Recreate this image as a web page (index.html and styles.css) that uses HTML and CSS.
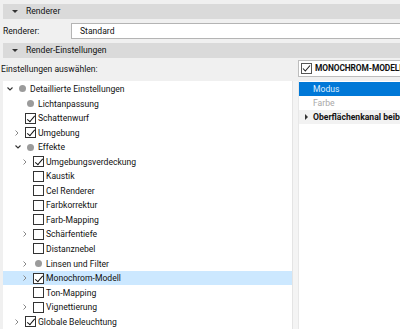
FILE: index.html
```html
<!DOCTYPE html>
<html>
<head>
<meta charset="utf-8">
<link rel="stylesheet" href="styles.css">
</head>
<body>
<div class="app">
  <div class="section-head"><span class="tri-down"></span>Renderer</div>
  <div class="field-row">
    <span class="field-label">Renderer:</span>
    <div class="select">Standard</div>
  </div>
  <div class="section-head"><span class="tri-down"></span>Render-Einstellungen</div>
  <div class="split">
    <div class="choose-label">Einstellungen auswählen:</div>
    <div class="divider-top"></div>
    <div class="prop-head">
      <span class="cb"><svg width="11" height="11" viewBox="0 0 11 11"><rect x="0.5" y="0.5" width="10" height="10" fill="#fff" stroke="#555"/><polyline points="2,5.5 4.3,8 9,2.5" fill="none" stroke="#222" stroke-width="1.1"/></svg></span>
      <span class="prop-title">MONOCHROM-MODELL</span>
    </div>

    <div class="tree">
      <div class="row l0"><span class="chev"><svg width="6" height="4" viewBox="0 0 6 4"><polyline points="0.5,0.5 3,3 5.5,0.5" fill="none" stroke="#333" stroke-width="1.1"/></svg></span><span class="ico"><span class="dot"></span></span><span class="txt">Detaillierte Einstellungen</span></div>
      <div class="row l1"><span class="chev"></span><span class="ico"><span class="dot"></span></span><span class="txt">Lichtanpassung</span></div>
      <div class="row l1"><span class="chev"></span><span class="ico"><span class="box on"></span></span><span class="txt">Schattenwurf</span></div>
      <div class="row l1"><span class="chev"><svg width="4" height="6" viewBox="0 0 4 6"><polyline points="0.5,0.5 3,3 0.5,5.5" fill="none" stroke="#888" stroke-width="1"/></svg></span><span class="ico"><span class="box on"></span></span><span class="txt">Umgebung</span></div>
      <div class="row l1"><span class="chev"><svg width="6" height="4" viewBox="0 0 6 4"><polyline points="0.5,0.5 3,3 5.5,0.5" fill="none" stroke="#333" stroke-width="1.1"/></svg></span><span class="ico"><span class="dot"></span></span><span class="txt">Effekte</span></div>
      <div class="row l2"><span class="chev"><svg width="4" height="6" viewBox="0 0 4 6"><polyline points="0.5,0.5 3,3 0.5,5.5" fill="none" stroke="#888" stroke-width="1"/></svg></span><span class="ico"><span class="box on"></span></span><span class="txt">Umgebungsverdeckung</span></div>
      <div class="row l2"><span class="chev"></span><span class="ico"><span class="box"></span></span><span class="txt">Kaustik</span></div>
      <div class="row l2"><span class="chev"></span><span class="ico"><span class="box"></span></span><span class="txt">Cel Renderer</span></div>
      <div class="row l2"><span class="chev"></span><span class="ico"><span class="box"></span></span><span class="txt">Farbkorrektur</span></div>
      <div class="row l2"><span class="chev"></span><span class="ico"><span class="box"></span></span><span class="txt">Farb-Mapping</span></div>
      <div class="row l2"><span class="chev"><svg width="4" height="6" viewBox="0 0 4 6"><polyline points="0.5,0.5 3,3 0.5,5.5" fill="none" stroke="#888" stroke-width="1"/></svg></span><span class="ico"><span class="box"></span></span><span class="txt">Schärfentiefe</span></div>
      <div class="row l2"><span class="chev"></span><span class="ico"><span class="box"></span></span><span class="txt">Distanznebel</span></div>
      <div class="row l2"><span class="chev"><svg width="4" height="6" viewBox="0 0 4 6"><polyline points="0.5,0.5 3,3 0.5,5.5" fill="none" stroke="#888" stroke-width="1"/></svg></span><span class="ico"><span class="dot"></span></span><span class="txt">Linsen und Filter</span></div>
      <div class="row l2 sel"><span class="chev"><svg width="4" height="6" viewBox="0 0 4 6"><polyline points="0.5,0.5 3,3 0.5,5.5" fill="none" stroke="#888" stroke-width="1"/></svg></span><span class="ico"><span class="box on"></span></span><span class="txt">Monochrom-Modell</span></div>
      <div class="row l2"><span class="chev"></span><span class="ico"><span class="box"></span></span><span class="txt">Ton-Mapping</span></div>
      <div class="row l2"><span class="chev"><svg width="4" height="6" viewBox="0 0 4 6"><polyline points="0.5,0.5 3,3 0.5,5.5" fill="none" stroke="#888" stroke-width="1"/></svg></span><span class="ico"><span class="box"></span></span><span class="txt">Vignettierung</span></div>
      <div class="row l1"><span class="chev"><svg width="4" height="6" viewBox="0 0 4 6"><polyline points="0.5,0.5 3,3 0.5,5.5" fill="none" stroke="#888" stroke-width="1"/></svg></span><span class="ico"><span class="box on"></span></span><span class="txt">Globale Beleuchtung</span></div>
    </div>
    <div class="divider"></div>
    <div class="props">
      <div class="prow active">Modus</div>
      <div class="prow disabled">Farbe</div>
      <div class="prow group"><span class="tri-right"></span>Oberflächenkanal beibehalten</div>
    </div>
  </div>
</div>
</body>
</html>
```

FILE: styles.css
```css
* { box-sizing: border-box; }
html, body { margin: 0; padding: 0; }
body {
  width: 400px;
  height: 329px;
  overflow: hidden;
  background: #f0f0f0;
  font-family: Roboto, "Noto Sans", sans-serif;
  font-size: 8.6px;
  color: #111;
}
.app {
  padding-top: 4px;
  display: flex;
  flex-direction: column;
  height: 329px;
}
.section-head {
  margin-left: 3px;
  height: 15px;
  background: #dadada;
  display: flex;
  align-items: center;
  padding-left: 9px;
  line-height: 15px;
}
.tri-down {
  flex-shrink: 0;
  width: 0; height: 0;
  border-left: 3px solid transparent;
  border-right: 3px solid transparent;
  border-top: 3px solid #333;
  margin-right: 8px;
}
.field-row {
  height: 24px;
  display: flex;
  align-items: center;
  padding-left: 3px;
}
.field-label { width: 68px; flex-shrink: 0; }
.select {
  flex: 1;
  height: 16px;
  background: #fff;
  border: 1px solid #b4b4b4;
  border-right: none;
  padding-left: 8px;
  line-height: 14px;
}
.split {
  flex: 1;
  display: grid;
  grid-template-columns: 292px 7px 1fr;
  grid-template-rows: 23px 1fr;
}
.choose-label {
  padding-left: 1px;
  line-height: 23px;
}
.prop-head {
  margin-top: 2px;
  height: 17px;
  margin-left: -1px;
  background: #fff;
  border: 1px solid #bdbdbd;
  border-right: none;
  display: flex;
  align-items: center;
  padding-left: 2px;
  white-space: nowrap;
  overflow: hidden;
}
.cb { display: flex; margin-right: 3px; flex-shrink: 0; }
.prop-title { font-weight: 700; color: #111; font-size: 8.4px; letter-spacing: -0.1px; }
.tree {
  margin-left: 3px;
  background: #fff;
  padding-top: 1px;
  overflow: hidden;
}
.row {
  height: 14.56px;
  display: flex;
  align-items: center;
  white-space: nowrap;
}
.row.sel { background: #cce8ff; }
.l0 { padding-left: 4px; }
.l1 { padding-left: 12px; }
.l2 { padding-left: 20px; }
.chev {
  flex-shrink: 0;
  width: 10px;
  display: flex;
  align-items: center;
}
.ico {
  flex-shrink: 0;
  width: 11px;
  height: 11px;
  display: flex;
  align-items: center;
  justify-content: center;
  margin-right: 2px;
}
.dot {
  width: 7px; height: 7px;
  border-radius: 50%;
  background: #9b9b9b;
}
.box {
  flex-shrink: 0;
  width: 11px; height: 11px;
  border: 1px solid #333;
  background: #fff;
  position: relative;
}
.box.on::after {
  content: "";
  position: absolute;
  left: 3px; top: 0px;
  width: 3px; height: 7px;
  border-right: 1.3px solid #111;
  border-bottom: 1.3px solid #111;
  transform: rotate(40deg);
}
.txt { color: #111; }
.divider {
  background: #f4f4f4;
  border-left: 1px solid #e4e4e4;
  border-right: 1px solid #e8e8e8;
}
.props {
  background: #fff;
  padding-top: 1px;
}
.prow {
  height: 14px;
  line-height: 14px;
  padding-left: 14px;
  white-space: nowrap;
  overflow: hidden;
}
.prow.active { background: #0078d7; color: #dfeeff; }
.prow.disabled { color: #a8a8a8; }
.prow.group {
  background: #f2f2f2;
  font-weight: 700;
  color: #111;
  padding-left: 6px;
  display: flex;
  align-items: center;
}
.tri-right {
  flex-shrink: 0;
  width: 0; height: 0;
  border-top: 3px solid transparent;
  border-bottom: 3px solid transparent;
  border-left: 3px solid #333;
  margin-right: 5px;
}
```
